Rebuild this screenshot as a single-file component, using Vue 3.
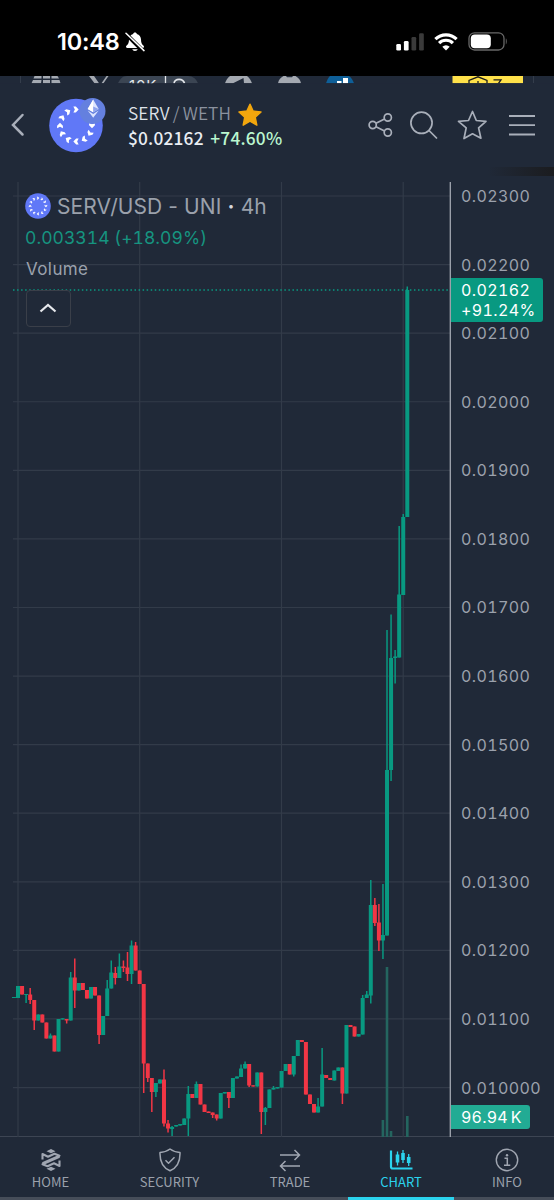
<template>
  <div class="screen">
    <!-- Status bar -->
    <div class="status-bar">
      <div class="clock">
        <span class="time">10:48</span>
        <svg class="bell" width="20" height="20" viewBox="0 0 20 20">
          <path d="M10 .5c-1 0-1.700.6-1.800 1.400C5.600 2.700 4 4.800 4 7.600c0 3.200-.8 4.600-2.300 5.900-.5.400-.7.800-.7 1.300 0 .7.500 1.200 1.300 1.200h15.400c.8 0 1.300-.5 1.300-1.200 0-.5-.2-.9-.7-1.300C16.800 12.200 16 10.800 16 7.600c0-2.800-1.600-4.900-4.200-5.700C11.700 1.100 11 .5 10 .5zM7.200 17.200a2.900 2.400 0 0 0 5.600 0z" fill="#fff" />
          <path d="M.5 1.500l18 18" stroke="#000" stroke-width="4" />
          <path d="M1 1.300l18 17.300" stroke="#fff" stroke-width="1.500" stroke-linecap="round" />
        </svg>
      </div>
      <div class="signals">
        <svg width="28" height="18" viewBox="0 0 28 18">
          <rect x="0.3" y="11" width="4.7" height="6.5" rx="1.3" fill="#fff" />
          <rect x="7.9" y="8" width="4.7" height="9.5" rx="1.3" fill="#fff" />
          <rect x="15.5" y="4" width="4.7" height="13.5" rx="1.3" fill="#3a3a3a" />
          <rect x="23.1" y="0.3" width="4.7" height="17.2" rx="1.3" fill="#3a3a3a" />
        </svg>
        <svg width="24" height="18" viewBox="0 0 24 18">
          <path d="M1.400 6.100a15.200 15.200 0 0 1 21.200 0" fill="none" stroke="#fff" stroke-width="3.2" />
          <path d="M5.100 10.100a9.800 9.800 0 0 1 13.800 0" fill="none" stroke="#fff" stroke-width="3.2" />
          <path d="M8.300 13.800a5.300 5.300 0 0 1 7.400 0L12 17.600z" fill="#fff" />
        </svg>
        <svg width="40" height="19" viewBox="0 0 40 19">
          <rect x="1" y="0.8" width="35" height="17.2" rx="5.5" fill="none" stroke="#686868" stroke-width="1.3" />
          <rect x="2.8" y="2.6" width="20" height="13.6" rx="4" fill="#fff" />
          <path d="M37.800 6.500c1.300.5 1.300 5.200 0 5.800z" fill="#686868" />
        </svg>
      </div>
    </div>

    <!-- Row of links scrolled under the header -->
    <svg class="strip" width="554" height="8" viewBox="0 0 554 8">
      <path d="M20.500 0v7M533.500 0v7" stroke="#343d4b" />
      <path d="M34.500 0h7v2.500h-8zM43 0h7v2.500h-7zM51.500 0h6l1.500 2.500h-7.500zM33 4h8.500l-.5 3.300h-9.500zM43 4h7v3.300h-7zM51.500 4h8l1 3.300h-9z" fill="#a4a9b1" />
      <path d="M89 0h5l5 7.300h-4.500zM108.500 0h-2l-5 7.300h2z" fill="#a4a9b1" />
      <path d="M118 7.300c2-4 4-7.300 9-7.300h61c5 0 8 3 10 7.300z" fill="#3b4553" />
      <text class="strip-text" x="129" y="14.5">10K</text>
      <path d="M165.500 0v7.300" stroke="#e4e7eb" stroke-width="1.3" />
      <path d="M174 7.300c1-5.300 9-5.300 10.500 0" fill="none" stroke="#e4e7eb" stroke-width="1.6" />
      <path d="M225 7.300c1-3 2.500-5.500 5-7.300h17c2.500 2 4 4.500 5 7.300h-8l-.5-5.300-10.500 5.300z" fill="#a4a9b1" />
      <path d="M278 7.300c.5-3.500 3-6 5.500-7.300h2.500l1 1.200h5l1-1.200h2.500c3 1.800 5 4 5.500 7.300z" fill="#a4a9b1" />
      <path d="M326 7.300c1-3 2-5.500 4-7.300h19c2.500 2 4 4.500 5 7.300z" fill="#0e5f98" />
      <path d="M337 5h4.500v2.300H337zM343 2h5v5.300h-5z" fill="#fff" />
      <path d="M452.500 0H523v7.300h-70.500z" fill="#ffe14a" />
      <path d="M469 7.300V4.500L478 .8l9 3.700v2.800M478 5v2.300M493.500 3.800h7.500l-2.500 3.500" fill="none" stroke="#1c1c1c" stroke-width="1.3" />
      <path d="M0 7.300h554V8H0z" fill="#202938" />
    </svg>

    <!-- Pair header -->
    <div class="header">
      <svg class="back" width="14" height="24" viewBox="0 0 14 24">
        <path d="M11.500 2L2 12l9.500 9.500" fill="none" stroke="#a9afba" stroke-width="2.5" stroke-linecap="round" />
      </svg>
      <svg class="token" width="58" height="58" viewBox="0 0 58 58">
        <circle cx="27" cy="29.5" r="26.8" fill="#6078f7" />
        <g fill="#fff">
          <path v-for="a in headerRing" :key="a" :transform="`translate(27 29.5) rotate(${a}) translate(0 -16) scale(.88)`" :d="chevron" />
        </g>
        <circle cx="43.5" cy="15" r="13" fill="#6480df" />
        <path d="M44.200 3.500l5.500 9.500-5.500 3.300-5.500-3.300z" fill="#dce4ff" />
        <path d="M44.200 3.500v12.800l-5.500-3.300z" fill="#fff" />
        <path d="M38.700 14.500l5.500 3.400 5.500-3.400-5.500 7.300z" fill="#dce4ff" />
        <path d="M44.200 10.500l5.500 2.500-5.500 3.300z" fill="#8fa4ed" />
      </svg>
      <div class="pair">
        <div class="pair-name">
          <span>SERV</span><span class="quote"><i>/</i>WETH</span>
          <svg width="24" height="24" viewBox="0 0 24 24">
            <path d="M12 1.200l3.100 6.900 7.900.9-5.800 5.200 1.600 7.900-6.800-3.900-6.800 3.900 1.600-7.900L1 9l7.900-.9z" fill="#f2a60d" stroke="#f2a60d" stroke-width="1.5" stroke-linejoin="round" />
          </svg>
        </div>
        <div class="pair-price">$0.02162 <span class="up">+74.60%</span></div>
      </div>
      <div class="actions">
        <svg class="share" width="25" height="26" viewBox="0 0 25 26">
          <g fill="none" stroke="#a9afba" stroke-width="1.7">
            <circle cx="4.7" cy="13" r="3.6" /><circle cx="19.8" cy="5.5" r="3.6" /><circle cx="19.8" cy="20.5" r="3.6" />
            <path d="M8 11.300l8.500-4.300M8 14.700l8.500 4.200" />
          </g>
        </svg>
        <svg class="search" width="28" height="28" viewBox="0 0 28 28">
          <g fill="none" stroke="#a9afba" stroke-width="1.7" stroke-linecap="round">
            <circle cx="11.5" cy="11.8" r="10.6" />
            <path d="M19 19.500l7.500 7.500" />
          </g>
        </svg>
        <svg class="favorite" width="30" height="30" viewBox="0 0 30 30">
          <path d="M15.500 1.500l3.800 9 9.700.8-7.400 6.600 2.300 10.300-8.400-4.400-8.500 4.700 2.200-10.600L1.500 11.300l10-.8z" fill="none" stroke="#a9afba" stroke-width="1.7" stroke-linejoin="round" />
        </svg>
        <svg width="26" height="22" viewBox="0 0 26 22">
          <path d="M0 2h26M0 11.200h26M0 20.500h26" stroke="#a9afba" stroke-width="1.8" />
        </svg>
      </div>
      <div class="shade"></div>
    </div>

    <!-- Chart -->
    <div class="chart">
      <svg class="plot" width="451" height="955" viewBox="0 182 451 955">
        <path v-for="(p, i) in prices" :key="p" :d="`M13 ${196 + i * 68.58}H450`" class="grid" />
        <path v-for="x in [18, 139.7, 281.5, 403.2]" :key="x" :d="`M${x} 182V1137`" class="grid" />
        <rect v-for="v in volumes" :key="v[0]" :x="v[0] - 1.3" :y="v[1]" width="2.6" :height="1137 - v[1]" fill="#24655f" />
        <g v-for="(c, i) in candles" :key="i" :fill="c[0] ? '#089981' : '#f23645'">
          <rect :x="13.95 + i * 4.055 - 0.75" :y="c[3] || c[1]" width="1.5" :height="(c[4] || c[2]) - (c[3] || c[1])" />
          <rect :x="13.95 + i * 4.055 - 2" :y="c[1]" width="4" :height="c[2] - c[1]" />
        </g>
        <path d="M13 290H450" stroke="#089981" stroke-width="1.5" stroke-dasharray="1.5 2.55" />
        <path d="M450.300 182V1137" stroke="#a3a7b0" stroke-width="1.3" />
      </svg>
      <div class="axis">
        <div v-for="p in prices" :key="p" class="tick">{{ p }}</div>
      </div>

      <div class="legend">
        <div class="legend-title">
          <svg width="26" height="26" viewBox="0 0 26 26">
            <circle cx="13" cy="13" r="12.8" fill="#6078f7" />
            <g fill="#fff">
              <path v-for="a in legendRing" :key="a" :transform="`translate(13 13) rotate(${a}) translate(0 -7.9) scale(.4)`" :d="chevron" />
            </g>
          </svg>
          <span>SERV/USD - UNI <b>·</b> 4h</span>
        </div>
        <div class="legend-change">0.003314 (+18.09%)</div>
        <div class="legend-volume">Volume</div>
        <button type="button" class="collapse">
          <svg width="18" height="10" viewBox="0 0 18 10">
            <path d="M1.500 8.500L9 2l7.500 6.500" fill="none" stroke="#e6e8ec" stroke-width="2.2" />
          </svg>
        </button>
      </div>
      <div class="price-tag">0.02162<br />+91.24%</div>
      <div class="volume-tag">96.94<i>K</i></div>
    </div>

    <!-- Bottom tabs -->
    <div class="tabs">
      <div class="tab home">
        <svg width="22" height="24" viewBox="0 0 21 24">
          <path d="M6 3.200L10.500 1 15 3.200l-4.500 2zM6 20.800l4.500 2.200 4.500-2.200-4.500-2z" fill="#a0a6b1" />
          <g fill="none" stroke="#a0a6b1" stroke-width="2.1" stroke-linejoin="round">
            <path d="M2 11.500V6l5.500 2.700L14 5.800l5 1.900L2 15.300" />
            <path d="M19 12.500V18l-5.500-2.700L7 18.200l-5-1.900L19 8.700" />
          </g>
        </svg>
        <span>HOME</span>
      </div>
      <div class="tab security">
        <svg width="22" height="24" viewBox="0 0 22 24">
          <path d="M11 1c3 2.300 6 3.300 10 3.500.3 8.500-2 14.800-10 18.300C3 19.300.7 13 1 4.500 5 4.300 8 3.300 11 1zM6.500 12.200l3 3 6-6" fill="none" stroke="#a0a6b1" stroke-width="1.5" stroke-linejoin="round" />
        </svg>
        <span>SECURITY</span>
      </div>
      <div class="tab trade">
        <svg width="22" height="24" viewBox="0 0 22 24">
          <path d="M1 7h19.500M15.500 2l5 5-5 5M21 18H1.500M6.500 13l-5 5 5 5" fill="none" stroke="#a0a6b1" stroke-width="1.5" />
        </svg>
        <span>TRADE</span>
      </div>
      <div class="tab chart-tab active">
        <svg width="24" height="24" viewBox="0 0 24 24">
          <path d="M2 2.500v16.300q0 1.700 1.700 1.700H23.500" fill="none" stroke="#2bd3ee" stroke-width="2.2" />
          <path d="M8.500 3.500v14M14 2v13M19.700 6v12" stroke="#2bd3ee" stroke-width="1.3" />
          <path d="M6.700 6.500h3.600v8H6.700zM12.200 5h3.600v7h-3.600zM17.900 9h3.600v6h-3.600z" fill="#2bd3ee" />
        </svg>
        <span>CHART</span>
      </div>
      <div class="tab info">
        <svg width="24" height="24" viewBox="0 0 24 24">
          <circle cx="12" cy="12" r="10.7" fill="none" stroke="#a0a6b1" stroke-width="1.4" />
          <path d="M9.500 10.300h2.800v6.700M9 17.200h6.300" fill="none" stroke="#a0a6b1" stroke-width="1.5" />
          <circle cx="12" cy="7.3" r="1.2" fill="#a0a6b1" />
        </svg>
        <span>INFO</span>
      </div>
    </div>
    <div class="underline"><div class="underline-active"></div></div>
  </div>
</template>

<script setup>
const chevron = 'M-3 -3.300H-0.200L3 0L-0.200 3.300H-3L-1.300 0Z';
// the badge covers the upper right part of the ring
const headerRing = [0, 90, 120, 150, 180, 210, 240, 270, 300, 330];
const legendRing = Array.from({ length: 12 }, (_, i) => i * 30);

const prices = [
  '0.02300', '0.02200', '0.02100', '0.02000', '0.01900', '0.01800', '0.01700',
  '0.01600', '0.01500', '0.01400', '0.01300', '0.01200', '0.01100', '0.010000',
];

// [x, top]
const volumes = [[382.9, 1120], [387, 967], [391, 1131], [407.3, 1116]];

// [up, body top, body bottom, wick top, wick bottom]
const candles = [
  [1, 997, 998], [1, 986, 998], [0, 986, 994.5], [1, 994, 995, 994, 1003], [0, 994.5, 1000, 988, 1004],
  [0, 1000, 1020.5, 1000, 1030], [1, 1014.5, 1020.5], [0, 1014.5, 1022.5], [0, 1022.5, 1038.5], [1, 1035.5, 1038.5, 1033.5],
  [0, 1035.5, 1051.5], [1, 1019, 1051.5], [1, 1018.3, 1019.5], [0, 1019, 1020.5, 1019, 1023.5], [1, 977.5, 1020.5, 972],
  [0, 977.5, 990.5, 958.5, 1008], [1, 983, 990.5], [0, 983, 990], [0, 990, 998.5], [1, 987, 998.5],
  [0, 987, 995.5], [0, 995.5, 1035, 995.5, 1044], [1, 1016, 1035], [1, 988.5, 1016, 980], [1, 972.5, 988.5, 960.5],
  [0, 973, 978, 967, 984.5], [1, 966.5, 978, 953.5], [0, 966.5, 968, 960.5, 972], [0, 967.5, 974, 952, 981], [1, 945.5, 974, 940.5, 984],
  [0, 945.5, 970.5, 942], [0, 970.5, 984], [0, 984, 1063.5, 984, 1093], [0, 1063.5, 1078, 1063.5, 1082], [0, 1078, 1092, 1078, 1112],
  [1, 1083, 1092, 1083, 1097], [1, 1079.5, 1083.5], [0, 1079.5, 1123.5, 1069.5, 1126.5], [0, 1123.5, 1128.5, 1120, 1132.5], [1, 1127, 1129, 1126, 1136],
  [1, 1125, 1126.5], [1, 1124, 1125.5], [1, 1118.5, 1125], [1, 1094, 1118.5, 1086, 1136], [0, 1094, 1098],
  [1, 1084, 1098, 1081.5], [0, 1084, 1104.5], [0, 1104.5, 1112], [0, 1111.5, 1113], [0, 1112.5, 1115, 1112.5, 1118],
  [0, 1114.5, 1118.5, 1114.5, 1120.5], [1, 1093, 1118.5], [1, 1092, 1093.5], [0, 1092, 1098, 1092, 1108], [1, 1078, 1098],
  [1, 1076.5, 1078.5], [1, 1068.5, 1077, 1064.5], [1, 1064, 1068.5, 1061.5], [0, 1064, 1085.5, 1064, 1087], [0, 1085.3, 1086.5],
  [1, 1072.5, 1086.5], [0, 1072.5, 1112, 1072.5, 1134], [1, 1108, 1112, 1107, 1125], [1, 1089.5, 1108], [1, 1088, 1089.5, 1086],
  [1, 1087, 1088.5], [1, 1071, 1087.5], [1, 1064, 1071], [0, 1064, 1074.5], [1, 1056, 1074.5, 1056, 1076.5],
  [1, 1040, 1056], [0, 1040, 1042], [0, 1042, 1094.5], [0, 1094.5, 1104], [0, 1104, 1112.5],
  [1, 1106.5, 1112.5, 1098], [1, 1074.5, 1106.5, 1048], [0, 1075, 1078], [0, 1078, 1080], [1, 1070.5, 1080.5],
  [1, 1067.5, 1071], [0, 1067.5, 1093.5, 1067.5, 1104], [1, 1025, 1093.5], [0, 1025, 1027], [0, 1026.5, 1036.5],
  [1, 1034, 1036.5], [1, 998, 1034.5, 995], [1, 994.5, 998, 991], [1, 905, 995.5, 880, 1003.5], [0, 905, 923, 898, 926],
  [0, 922.5, 940.5, 904, 951], [1, 935, 940.5, 884, 959], [1, 770, 935.5, 630], [1, 658, 770, 614.5, 781], [1, 656.5, 658, 650, 683.5],
  [1, 594.5, 657.5, 526], [1, 517, 595, 514], [1, 290, 517, 286.5],
];
</script>

<style>
body {
  margin: 0;
  background: #202938;
}
</style>

<style scoped>
.screen {
  width: 554px;
  height: 1200px;
  display: flex;
  flex-direction: column;
  overflow: hidden;
  background: #202938;
  color: #9ba1ac;
  font-family: "Inter", sans-serif;
}

.screen svg {
  display: block;
  flex: none;
}

.status-bar {
  height: 76px;
  flex: none;
  box-sizing: border-box;
  padding: 7px 46px 0 57px;
  display: flex;
  align-items: center;
  justify-content: space-between;
  background: #000;
}

.clock, .signals {
  display: flex;
  align-items: center;
}

.time {
  font-size: 23.5px;
  font-weight: 600;
  color: #fff;
  letter-spacing: -0.2px;
  margin-right: 5px;
}

.signals {
  gap: 10px;
}

.strip {
  height: 8px;
}

.strip-text {
  font-size: 15px;
  letter-spacing: 0.8px;
  fill: #e4e7eb;
}

.header {
  height: 98px;
  flex: none;
  box-sizing: border-box;
  position: relative;
  padding: 12px 19px 28px 11px;
  display: flex;
  align-items: center;
  font-family: "Noto Sans CJK SC", sans-serif;
}

.token {
  margin-left: 24px;
}

.pair {
  margin-left: 21px;
  padding-top: 2px;
}

.pair-name {
  height: 24px;
  display: flex;
  align-items: center;
  font-size: 17.3px;
  font-weight: 350;
  letter-spacing: 0.15px;
  color: #dfe3ea;
}

.pair-name span {
  height: 26px;
  line-height: 24px;
}

.pair-name svg {
  margin-top: 2px;
}

.quote {
  color: #8b929f;
  margin-right: 7px;
}

.quote i {
  font-style: normal;
  margin: 0 3px;
}

.pair-price {
  line-height: 24px;
  font-size: 17.3px;
  font-weight: 500;
  letter-spacing: 0.2px;
  word-spacing: 2.5px;
  color: #e9edf3;
}

.up {
  color: #bbf7d0;
}

.actions {
  margin-left: auto;
  display: flex;
  align-items: center;
}

.share {
  margin-right: 17px;
}

.search {
  margin-right: 19px;
}

.favorite {
  margin-right: 22px;
}

.shade {
  position: absolute;
  right: 0;
  bottom: 6px;
  width: 66px;
  height: 9px;
  background: linear-gradient(90deg, #202938, #1b1c1f);
}

.chart {
  height: 955px;
  flex: none;
  position: relative;
  display: flex;
  border-bottom: 1px solid #3d4553;
  box-sizing: border-box;
}

.grid {
  stroke: #323b49;
  stroke-width: 1.2;
  fill: none;
}

.axis {
  padding-left: 10px;
}

.tick {
  height: 68.58px;
  line-height: 28px;
  font-size: 16px;
  letter-spacing: 0.4px;
  font-variant-numeric: tabular-nums;
}

.legend {
  position: absolute;
  left: 25px;
  top: 10px;
}

.legend-title {
  height: 28px;
  display: flex;
  align-items: center;
  gap: 6px;
  font-size: 21px;
  letter-spacing: 0.1px;
  white-space: nowrap;
}

.legend-title b {
  color: #d5d8de;
}

.legend-change {
  height: 34px;
  line-height: 35px;
  font-size: 17.5px;
  letter-spacing: 0.05px;
  font-variant-numeric: tabular-nums;
  color: #169480;
}

.legend-volume {
  padding-left: 1px;
  height: 30px;
  line-height: 31px;
  font-size: 17px;
  letter-spacing: 0.4px;
}

.collapse {
  width: 45px;
  height: 37px;
  margin-top: 6px;
  margin-left: 0.5px;
  padding: 0 0 2px;
  display: flex;
  align-items: center;
  justify-content: center;
  background: none;
  border: 1px solid #3a3f49;
  border-radius: 4px;
}

.price-tag, .volume-tag {
  position: absolute;
  left: 451px;
  box-sizing: border-box;
  padding-left: 10px;
  color: #fff;
  font-size: 16px;
  letter-spacing: 0.4px;
  font-variant-numeric: tabular-nums;
  white-space: nowrap;
  border-radius: 0 3px 3px 0;
}

.price-tag {
  top: 96px;
  width: 92px;
  height: 44px;
  padding-top: 3px;
  line-height: 19.5px;
  background: #089981;
}

.volume-tag {
  top: 923px;
  width: 79px;
  height: 24px;
  line-height: 24px;
  letter-spacing: 0.2px;
  background: #22ab94;
}

.volume-tag i {
  font-style: normal;
  margin-left: 3px;
}

.tabs {
  height: 60px;
  flex: none;
  display: flex;
  font-family: "Noto Sans CJK SC", sans-serif;
  font-size: 13px;
}

.tab {
  box-sizing: border-box;
  padding-top: 11px;
  display: flex;
  flex-direction: column;
  align-items: center;
}

.tab span {
  line-height: 20px;
}

.home {
  width: 101px;
}

.security {
  width: 137px;
}

.trade {
  width: 104px;
}

.chart-tab {
  width: 118px;
}

.info {
  width: 94px;
}

.active {
  color: #2bd3ee;
}

.underline {
  height: 3px;
  flex: none;
  padding-left: 348px;
  background: #464d59;
}

.underline-active {
  width: 106px;
  height: 3px;
  background: #2bd3ee;
}
</style>
